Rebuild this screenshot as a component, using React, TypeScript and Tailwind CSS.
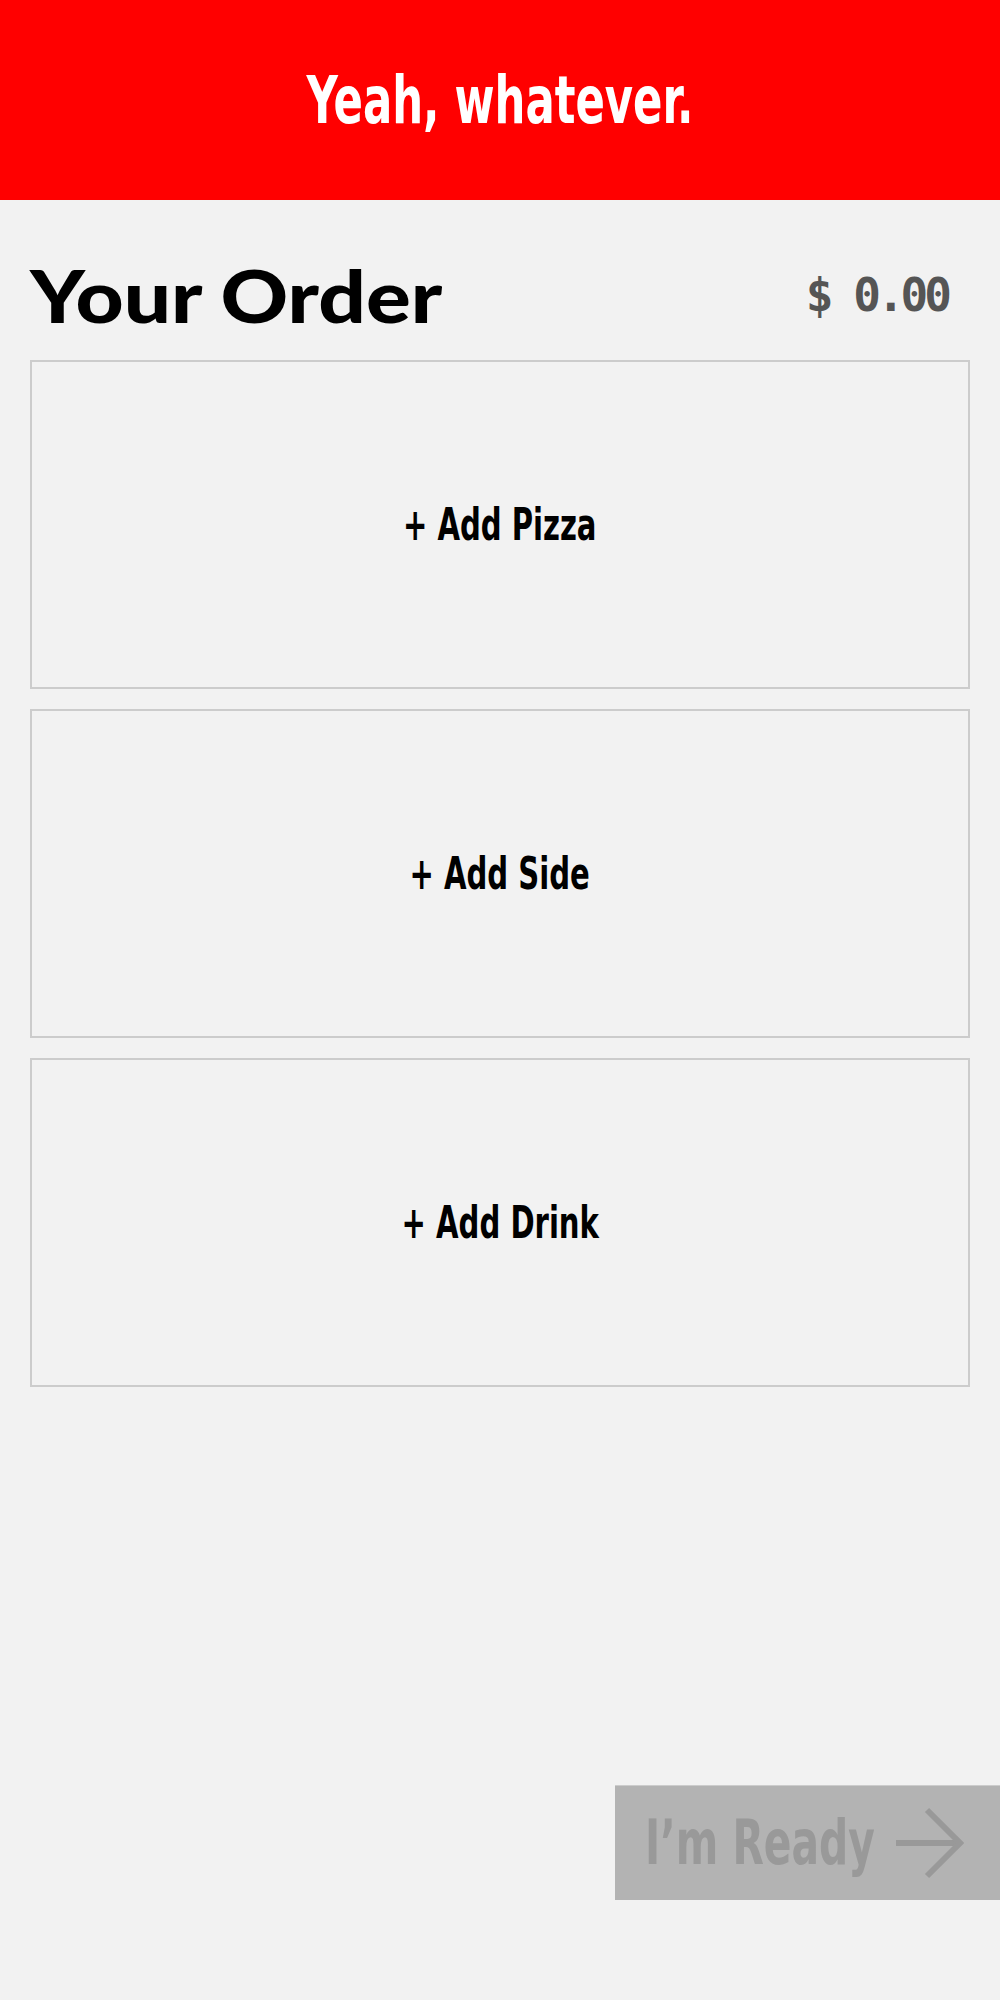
import React from "react";

const narrow = { fontFamily: '"DejaVu Sans Condensed", "Liberation Sans", sans-serif' };

function AddBox({ label }: { label: string }) {
  return (
    <button className="h-[329px] w-full border-2 border-[#cccccc] bg-[#f2f2f2] flex items-center justify-center">
      <span className="inline-block whitespace-nowrap text-[44px] font-bold text-black scale-x-[0.735]" style={narrow}>{label}</span>
    </button>
  );
}

export default function App() {
  return (
    <div className="min-h-[2000px] bg-[#f2f2f2] flex flex-col">
      <header className="h-[200px] bg-[#ff0000] flex items-center justify-center">
        <h1 className="inline-block whitespace-nowrap text-[66px] font-bold text-white scale-x-[0.73]" style={narrow}>Yeah, whatever.</h1>
      </header>
      <div className="px-[30px]">
        <div className="mt-[40px] h-[100px] flex items-center justify-between pr-[22px]">
          <h2 className="inline-block whitespace-nowrap origin-left scale-x-[1.16] mt-[10px] text-[72px] font-black text-black leading-none" style={{ fontFamily: 'Lato, "Liberation Sans", sans-serif' }}>Your Order</h2>
          <span className="text-[46px] font-bold text-[#555555] leading-none tracking-[-4px] mt-[10px]" style={{ fontFamily: '"DejaVu Sans Mono", monospace' }}>$ 0.00</span>
        </div>
        <div className="mt-[20px] flex flex-col gap-[20px]">
          <AddBox label="+ Add Pizza" />
          <AddBox label="+ Add Side" />
          <AddBox label="+ Add Drink" />
        </div>
      </div>
      <div className="mt-[398px] flex justify-end">
        <button className="w-[385px] h-[115px] bg-[#b3b3b3] border-t border-[#cccccc] flex items-center justify-between pl-[30px] pr-[36px]">
          <div className="w-[235px] flex">
            <span className="inline-block whitespace-nowrap origin-left scale-x-[0.72] text-[63px] font-bold text-[#999999]" style={narrow}>I’m Ready</span>
          </div>
          <svg width="68" height="72" viewBox="0 0 68 72" fill="none" stroke="#999999" strokeWidth="6" className="shrink-0">
            <path d="M0 36 H64" />
            <path d="M31 3 L64 36 L31 69" />
          </svg>
        </button>
      </div>
    </div>
  );
}
